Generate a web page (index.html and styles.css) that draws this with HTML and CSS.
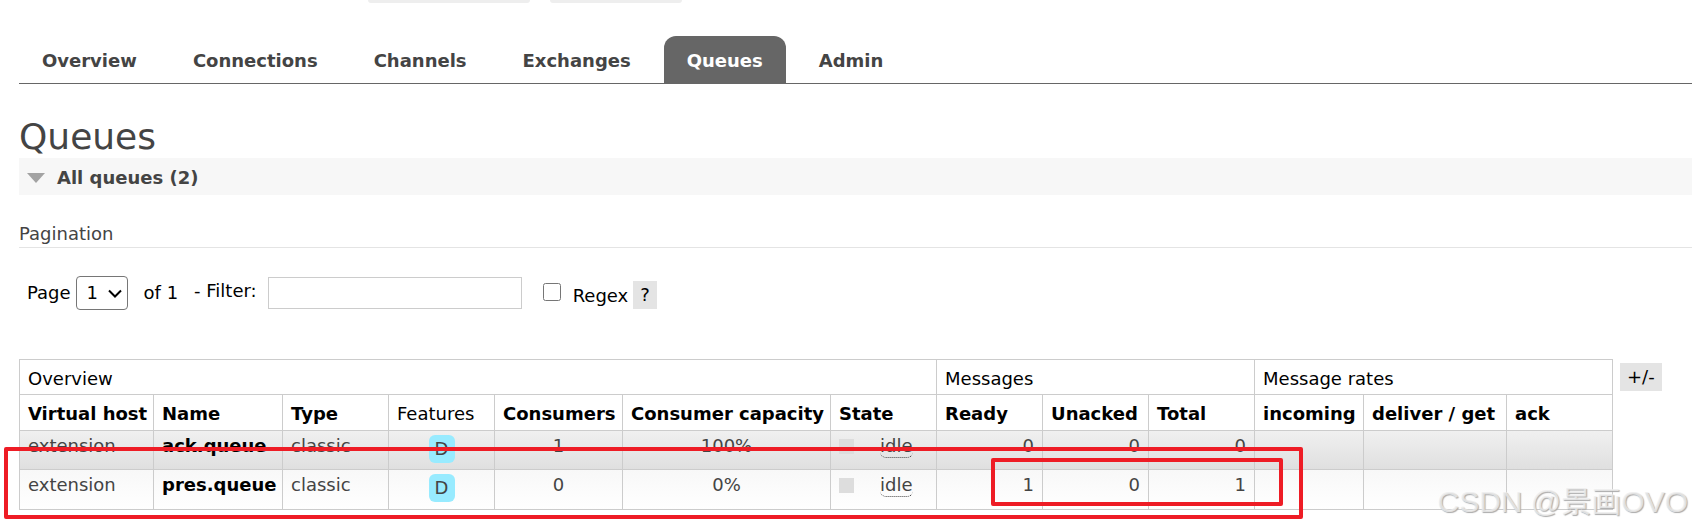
FILE: index.html
```html
<!DOCTYPE html>
<html lang="en">
<head>
	<meta charset="utf-8">
	<title>Queues</title>
	<link rel="stylesheet" href="styles.css">
</head>
<body>
	<div class="status">
		<span class="status-item status-version"></span>
		<span class="status-item"></span>
	</div>
	<nav class="menu">
		<a class="tab" href="#overview">Overview</a>
		<a class="tab" href="#connections">Connections</a>
		<a class="tab" href="#channels">Channels</a>
		<a class="tab" href="#exchanges">Exchanges</a>
		<a class="tab selected" href="#queues">Queues</a>
		<a class="tab" href="#admin">Admin</a>
	</nav>
	<main class="main">
		<h1>Queues</h1>
		<h2><span class="arrow"></span>All queues (2)</h2>
		<h3>Pagination</h3>
		<form class="filter">
			<label for="page">Page</label>
			<div class="page-box">
				<select id="page" class="page-select"><option>1</option></select>
				<svg class="chevron" width="14" height="9" viewBox="0 0 14 9"><path d="M1 1.5 L7 7.5 L13 1.5" fill="none" stroke="black" stroke-width="2"/></svg>
			</div>
			<span class="page-count">of 1</span>
			<label class="filter-label" for="filter">- Filter:</label>
			<input type="text" id="filter" class="filter-text">
			<input type="checkbox" id="regex" class="filter-check">
			<label class="regex-label" for="regex">Regex</label>
			<button type="button" class="help help-regex">?</button>
		</form>
		<div class="list">
			<table class="queues">
				<colgroup>
					<col class="col-vhost"><col class="col-name"><col><col><col class="col-consumers"><col class="col-capacity"><col>
					<col><col><col>
					<col class="col-incoming"><col class="col-deliver"><col>
				</colgroup>
				<thead>
					<tr>
						<th colspan="7">Overview</th>
						<th colspan="3">Messages</th>
						<th colspan="3">Message rates</th>
					</tr>
					<tr class="sort">
						<th><b>Virtual host</b></th>
						<th><b>Name</b></th>
						<th><b>Type</b></th>
						<th>Features</th>
						<th><b>Consumers</b></th>
						<th><b>Consumer capacity</b></th>
						<th><b>State</b></th>
						<th><b>Ready</b></th>
						<th><b>Unacked</b></th>
						<th><b>Total</b></th>
						<th><b>incoming</b></th>
						<th><b>deliver / get</b></th>
						<th><b>ack</b></th>
					</tr>
				</thead>
				<tbody>
					<tr class="alt1">
						<td>extension</td>
						<td><a class="queue" href="#ack">ack.queue</a></td>
						<td>classic</td>
						<td class="c"><span class="tag">D</span></td>
						<td class="c">1</td>
						<td class="c">100%</td>
						<td><div class="state"><span class="square"></span><span class="idle">idle</span></div></td>
						<td class="r">0</td>
						<td class="r">0</td>
						<td class="r">0</td>
						<td></td>
						<td></td>
						<td></td>
					</tr>
					<tr class="alt2">
						<td>extension</td>
						<td><a class="queue" href="#pres">pres.queue</a></td>
						<td>classic</td>
						<td class="c"><span class="tag">D</span></td>
						<td class="c">0</td>
						<td class="c">0%</td>
						<td><div class="state"><span class="square"></span><span class="idle">idle</span></div></td>
						<td class="r">1</td>
						<td class="r">0</td>
						<td class="r">1</td>
						<td></td>
						<td></td>
						<td></td>
					</tr>
				</tbody>
			</table>
			<button type="button" class="help help-columns">+/-</button>
			<div class="mark mark-row"></div>
			<div class="mark mark-counts"></div>
		</div>
	</main>
	<div class="watermark">CSDN @景画OVO</div>
</body>
</html>
```
FILE: styles.css
```css
*{
	box-sizing: border-box;
}
body{
	margin: 0;
	background: white;
	color: #444;
	font-family: Verdana, "DejaVu Sans", sans-serif;
	font-size: 18px;
	line-height: 22px;
}

/* bottom edge of the status line */
.status{
	display: flex;
	gap: 20px;
	height: 36px;
	padding-left: 368px;
}
.status-item{
	width: 132px;
	height: 3px;
	background: #eee;
	border-radius: 0 0 6px 6px;
}
.status-version{
	width: 162px;
}

.menu{
	display: flex;
	gap: 10px;
	margin-left: 19px;
	border-bottom: 1px solid #666;
}
.tab{
	padding: 14px 23px 11px;
	border-radius: 12px 12px 0 0;
	color: #444;
	font-weight: bold;
	text-decoration: none;
}
.selected{
	background: #666;
	color: white;
}

.main{
	padding: 0 0 20px 19px;
}
h1{
	margin: 32px 0 0;
	font-size: 36px;
	line-height: 42px;
	font-weight: normal;
}
h2{
	display: flex;
	align-items: center;
	gap: 12px;
	margin: 0;
	padding: 9px 8px 6px;
	background: #f7f7f7;
	font-size: 18px;
}
.arrow{
	border: 9px solid transparent;
	border-top: 10px solid #a3a3a3;
	border-bottom: 0;
}
h3{
	margin: 28px 0;
	padding-bottom: 2px;
	border-bottom: 1px solid #e4e4e4;
	font-size: 18px;
	font-weight: normal;
}

.filter{
	display: flex;
	align-items: center;
	height: 34px;
	padding-left: 8px;
	color: black;
}
.page-box{
	position: relative;
	margin-left: 5px;
}
.page-select{
	display: block;
	appearance: none;
	width: 52px;
	height: 34px;
	padding: 0 10px;
	border: 1px solid #767676;
	border-radius: 4px;
	background: white;
	color: black;
	font: inherit;
}
.chevron{
	position: absolute;
	right: 6px;
	top: 13px;
	pointer-events: none;
}
.page-count{
	margin: 0 16px;
}
.filter-label{
	padding-bottom: 4px;
}
.filter-text{
	width: 254px;
	height: 32px;
	margin: 0 21px 0 11px;
	border: 1px solid #ccc;
	font: inherit;
}
.filter-check{
	width: 18px;
	height: 18px;
	margin: 0 12px 2px 0;
}
.regex-label{
	padding-top: 6px;
}
.help{
	height: 28px;
	padding: 0 7px;
	border: 0;
	background: #e4e4e4;
	color: black;
	font: inherit;
}
.help-regex{
	margin: 4px 0 0 5px;
}
.help-columns{
	margin: 4px 0 0 7px;
}

.list{
	position: relative;
	display: flex;
	align-items: flex-start;
	margin-top: 49px;
}
.queues{
	table-layout: fixed;
	width: 1594px;
	border-collapse: collapse;
}
.queues col{
	width: 106px;
}
.queues .col-vhost{
	width: 134px;
}
.queues .col-name{
	width: 129px;
}
.queues .col-consumers{
	width: 128px;
}
.queues .col-capacity{
	width: 208px;
}
.queues .col-incoming{
	width: 109px;
}
.queues .col-deliver{
	width: 143px;
}
th, td{
	padding: 4px 8px 0;
	border: 1px solid #ccc;
	text-align: left;
	vertical-align: top;
	white-space: nowrap;
}
th{
	height: 35px;
	padding-top: 8px;
	color: black;
	font-weight: normal;
}
.sort th{
	height: 36px;
}
td{
	height: 39px;
}
.alt1{
	background: linear-gradient(#f0f0f0, #dfdfdf);
}
.alt2{
	background: linear-gradient(#f8f8f8, #fff);
}
.alt2 td{
	height: 40px;
}
.c{
	text-align: center;
}
.r{
	text-align: right;
}
.queue{
	color: black;
	font-weight: bold;
	text-decoration: none;
}
.tag{
	display: block;
	width: 26px;
	height: 28px;
	margin: 0 auto;
	border-radius: 6px;
	background: #98ebff;
	line-height: 28px;
}
.state{
	display: flex;
	gap: 26px;
}
.square{
	width: 15px;
	height: 15px;
	margin-top: 4px;
	background: #ddd;
}
.idle{
	border-bottom: 1px dotted #444;
	border-radius: 6px;
}

/* red boxes drawn over the table */
.mark{
	position: absolute;
	border: 4px solid #ee1c25;
	border-radius: 2px;
}
.mark-row{
	left: -15px;
	top: 88px;
	width: 1299px;
	height: 72px;
}
.mark-counts{
	left: 972px;
	top: 99px;
	width: 292px;
	height: 48px;
}
.watermark{
	position: absolute;
	right: 4px;
	top: 484px;
	color: rgba(238, 238, 238, 0.8);
	font-family: "Liberation Sans", "Noto Sans CJK SC", sans-serif;
	font-size: 30px;
	line-height: 36px;
	text-shadow: 1px 1px 1px #aaa;
}
```
